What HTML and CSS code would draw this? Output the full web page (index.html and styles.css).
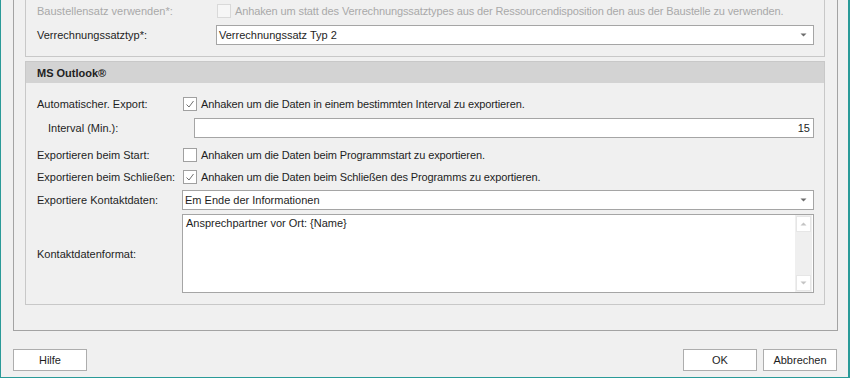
FILE: index.html
```html
<!DOCTYPE html>
<html lang="de">
<head>
<meta charset="utf-8">
<title>MS Outlook Einstellungen</title>
<link rel="stylesheet" href="styles.css">
</head>
<body>
<div class="frame">
  <div class="outer">
    <div class="group group-top">
      <div class="row">
        <span class="label label-top disabled">Baustellensatz verwenden*:</span>
        <span class="check check-disabled"></span>
        <span class="check-text disabled">Anhaken um statt des Verrechnungssatztypes aus der Ressourcendisposition den aus der Baustelle zu verwenden.</span>
      </div>
      <div class="row row-gap4">
        <span class="label label-top">Verrechnungssatztyp*:</span>
        <div class="combo combo-top">
          <span class="combo-text">Verrechnungssatz Typ 2</span>
          <svg class="arrow" width="7" height="4" viewBox="0 0 7 4"><path d="M0.5 0.5 H6.5 L3.5 3.5 Z" fill="#6d6d6d"/></svg>
        </div>
      </div>
    </div>
    <div class="group group-outlook">
      <div class="group-header">MS Outlook®</div>
      <div class="group-body">
        <div class="row">
          <span class="label">Automatischer. Export:</span>
          <span class="check"><svg width="12" height="12" viewBox="0 0 12 12"><path d="M2.5 6.5 L5 9 L9.5 3" fill="none" stroke="#707070" stroke-width="1"/></svg></span>
          <span class="check-text">Anhaken um die Daten in einem bestimmten Interval zu exportieren.</span>
        </div>
        <div class="row row-gap4">
          <span class="label label-indent">Interval (Min.):</span>
          <div class="textbox">15</div>
        </div>
        <div class="row row-gap7">
          <span class="label">Exportieren beim Start:</span>
          <span class="check"></span>
          <span class="check-text">Anhaken um die Daten beim Programmstart zu exportieren.</span>
        </div>
        <div class="row row-gap2">
          <span class="label">Exportieren beim Schließen:</span>
          <span class="check"><svg width="12" height="12" viewBox="0 0 12 12"><path d="M2.5 6.5 L5 9 L9.5 3" fill="none" stroke="#707070" stroke-width="1"/></svg></span>
          <span class="check-text">Anhaken um die Daten beim Schließen des Programms zu exportieren.</span>
        </div>
        <div class="row row-gap3">
          <span class="label">Exportiere Kontaktdaten:</span>
          <div class="combo">
            <span class="combo-text combo-text-3">Em Ende der Informationen</span>
            <svg class="arrow" width="7" height="4" viewBox="0 0 7 4"><path d="M0.5 0.5 H6.5 L3.5 3.5 Z" fill="#6d6d6d"/></svg>
          </div>
        </div>
        <div class="row row-memo row-gap4">
          <span class="label">Kontaktdatenformat:</span>
          <div class="memo">
            <div class="memo-text">Ansprechpartner vor Ort: {Name}</div>
            <div class="scrollbar">
              <span class="sb-btn"><svg width="7" height="4" viewBox="0 0 7 4"><path d="M0.5 3.5 H6.5 L3.5 0.5 Z" fill="#c4c4c4"/></svg></span>
              <span class="sb-btn"><svg width="7" height="4" viewBox="0 0 7 4"><path d="M0.5 0.5 H6.5 L3.5 3.5 Z" fill="#c4c4c4"/></svg></span>
            </div>
          </div>
        </div>
      </div>
    </div>
  </div>
  <div class="buttons">
    <button class="btn">Hilfe</button>
    <div class="spacer"></div>
    <button class="btn">OK</button>
    <button class="btn">Abbrechen</button>
  </div>
</div>
</body>
</html>
```

FILE: styles.css
```css
html, body {
  margin: 0;
  padding: 0;
  background: #f0f0f0;
  overflow: hidden;
}

.frame {
  width: 850px;
  height: 378px;
  box-sizing: border-box;
  border-left: 1px solid #2a9a98;
  border-right: 2px solid #2a9a98;
  border-bottom: 1px solid #2a9a98;
  background: #f0f0f0;
  padding: 0 10px 0 12px;
  display: flex;
  flex-direction: column;
  overflow: hidden;
  font-family: "Liberation Sans", Arial, sans-serif;
  font-size: 11px;
  color: #1e1e1e;
}

.outer {
  margin-top: -30px;
  border: 1px solid #a3a3a3;
  padding: 0 12px 25px 11px;
}

.group {
  border: 1px solid #c8c8c8;
}

.group-top {
  margin-top: 10px;
  padding: 19px 10px 11px 11px;
}

.group-outlook {
  margin-top: 4px;
}

.group-header {
  height: 21px;
  background: #d3d3d3;
  font-weight: bold;
  display: flex;
  align-items: center;
  padding-left: 11px;
  color: #222;
}

.group-body {
  padding: 11px 10px 11px 11px;
}

.row {
  display: flex;
  align-items: center;
  height: 20px;
}

.row-gap2 { margin-top: 2px; }
.row-gap3 { margin-top: 3px; }
.row-gap4 { margin-top: 4px; }
.row-gap7 { margin-top: 7px; }

.row-memo {
  height: 79px;
}

.label {
  width: 145px;
  flex: none;
  white-space: nowrap;
}

.label-top {
  width: 179px;
}

.label-indent {
  width: 146px;
  padding-left: 11px;
}

.disabled {
  color: #a9a9a9;
}

.check {
  width: 14px;
  height: 14px;
  box-sizing: border-box;
  border: 1px solid #a0a0a0;
  background: #fff;
  margin-left: 1px;
  flex: none;
  display: flex;
  align-items: center;
  justify-content: center;
}

.check-disabled {
  border-color: #d9d9d9;
  background: #f6f6f6;
}

.check-text {
  margin-left: 4px;
  white-space: nowrap;
  letter-spacing: -0.12px;
}

.combo {
  flex: 1;
  height: 20px;
  box-sizing: border-box;
  border: 1px solid #a5a5a5;
  background: #fff;
  display: flex;
  align-items: center;
  padding-right: 6px;
}

.combo-text {
  flex: 1;
  padding-left: 2px;
  white-space: nowrap;
}

.combo-text-3 {
  padding-left: 2px;
}

.arrow {
  flex: none;
}

.textbox {
  flex: 1;
  height: 20px;
  box-sizing: border-box;
  border: 1px solid #a5a5a5;
  background: #fff;
  display: flex;
  align-items: center;
  justify-content: flex-end;
  padding-right: 3px;
}

.memo {
  flex: 1;
  align-self: stretch;
  box-sizing: border-box;
  border: 1px solid #a5a5a5;
  background: #fff;
  display: flex;
}

.memo-text {
  flex: 1;
  padding: 2px 3px;
  line-height: 13px;
}

.scrollbar {
  width: 17px;
  margin-right: 1px;
  background: #efefef;
  display: flex;
  flex-direction: column;
  justify-content: space-between;
  padding: 1px 0;
}

.sb-btn {
  width: 15px;
  height: 16px;
  margin-left: 1px;
  box-sizing: border-box;
  background: #fff;
  border: 1px solid #e6e6e6;
  display: flex;
  align-items: center;
  justify-content: center;
}

.buttons {
  display: flex;
  margin-top: 18px;
  padding-right: 1px;
}

.spacer {
  flex: 1;
}

.btn {
  width: 74px;
  height: 22px;
  box-sizing: border-box;
  border: 1px solid #adadad;
  background: #fff;
  font-family: "Liberation Sans", Arial, sans-serif;
  font-size: 11px;
  color: #1e1e1e;
  padding: 0;
  margin: 0 0 0 6px;
}

.btn:first-child {
  margin-left: 0;
}
```
